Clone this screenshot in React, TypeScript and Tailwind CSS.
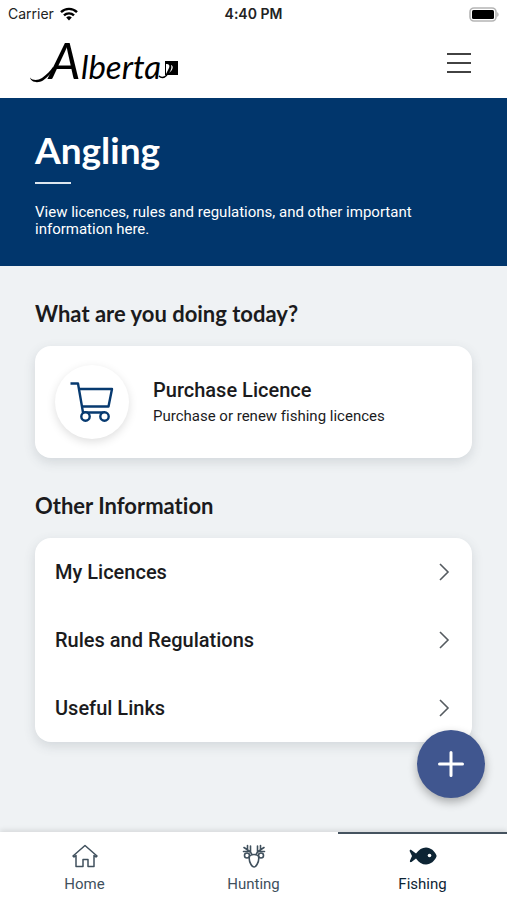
import { useState } from 'react'
import type { ReactNode } from 'react'

type TabId = 'home' | 'hunting' | 'fishing'

const LINKS = ['My Licences', 'Rules and Regulations', 'Useful Links']

function StatusBar() {
  return (
    <div className="grid h-7 grid-cols-3 items-center px-2 font-['Inter',sans-serif] text-sm text-[#222222]">
      <div className="flex items-center gap-1.5">
        <span>Carrier</span>
        <svg width="18" height="14" viewBox="0 0 18 14" fill="none" stroke="#000" strokeWidth="2.4" aria-hidden="true">
          <path d="M1 5.2a11.4 11.4 0 0 1 16 0" />
          <path d="M4 8.4a7.2 7.2 0 0 1 10 0" />
          <path d="M9 13.4 6.2 10.6a4 4 0 0 1 5.6 0z" fill="#000" stroke="none" />
        </svg>
      </div>
      <span className="text-center font-semibold whitespace-nowrap">4:40 PM</span>
      <svg className="justify-self-end" width="30" height="15" viewBox="0 0 30 15" aria-hidden="true">
        <rect x="1" y="1" width="26" height="13" rx="4" fill="#fff" stroke="#b5b5b5" strokeWidth="1.6" />
        <rect x="3" y="3" width="22" height="9" rx="1.5" fill="#000" />
        <path d="M28.3 5.2c1.6.6 1.6 4 0 4.6z" fill="#a5a5a5" />
      </svg>
    </div>
  )
}

function Logo() {
  return (
    <svg className="overflow-visible" width="150" height="46" viewBox="0 0 150 46" role="img" aria-label="Alberta">
      {/* Swash running into the wordmark */}
      <path d="M0 37.500c3 3.500 8 3 12 .5 5-3.500 8-7 11-11l1 1.500C21 33 18 37 13 40.500 8 43.500 1 42.500 0 37.500z" />
      <text x="19" y="39" fontFamily="Lato, sans-serif" fontStyle="italic" fontSize="50">A</text>
      <text x="51" y="39" fontFamily="Lato, sans-serif" fontStyle="italic" fontSize="33">lberta</text>
      <path d="M129 36c2 2 5 2 8-1" fill="none" stroke="#000" strokeWidth="1.5" />
      {/* Square mark */}
      <rect x="135" y="21" width="13" height="14" />
      <path d="M136 24c3 0 4 1 3 4l-3 6zM141 25c3 1 2 5-2 8 2-3 3-5 2-8z" fill="#fff" />
    </svg>
  )
}

function CartIcon() {
  return (
    <svg width="44" height="40" viewBox="0 0 44 40" fill="none" stroke="#073a70" strokeWidth="2.4" strokeLinejoin="round" aria-hidden="true">
      <path d="M.5 1.500H8L13 30.500h22" />
      <path d="M9 7h33l-3.500 17.500H12" />
      <circle cx="15.500" cy="34.500" r="4.200" fill="#fff" />
      <circle cx="34.500" cy="34.500" r="4.200" fill="#fff" />
    </svg>
  )
}

function HomeIcon() {
  return (
    <svg width="26" height="24" viewBox="0 0 26 24" fill="none" stroke="currentColor" strokeWidth="1.5" strokeLinejoin="round" aria-hidden="true">
      <path d="M1 12 13 1.5 25 12l-1 1-2-1.5V22.5h-6v-7h-5v7H4V11.5L2 13z" />
    </svg>
  )
}

function DeerIcon() {
  return (
    <svg width="24" height="24" viewBox="0 0 24 24" fill="none" stroke="currentColor" strokeWidth="1.6" strokeLinecap="round" strokeLinejoin="round" aria-hidden="true">
      <path d="M10 10.500C9 8 6 6 2 3.500M14 10.500c1-2.500 4-4.500 8-7M5.500 5.500V1.500M18.500 5.500V1.500M8.500 8V2M15.500 8V2M6 7.500H1.500M18 7.500h4.500" />
      <circle cx="5" cy="11.500" r="2.500" />
      <circle cx="19" cy="11.500" r="2.500" />
      <path d="M7.500 12c2.500-2 6.500-2 9 0 .8 3.500 0 6-1.500 8.500-.8 1.500-1.600 2.500-3 2.500s-2.200-1-3-2.500C7.500 18 6.700 15.500 7.500 12z" />
    </svg>
  )
}

function FishIcon() {
  return (
    <svg width="28" height="24" viewBox="0 0 28 24" fill="currentColor" aria-hidden="true">
      <path d="M7 9.500C10 5.500 13 3.500 17 3.500c5 0 8.500 3.800 10.300 7.500.4.700.4 1.300 0 2-1.800 3.700-5.300 7.500-10.300 7.500-4 0-7-2-10-6l-4.500 3.500c-1.300.5-1.900-.3-1.500-1.500L3 12 .8 7.500c-.4-1.200.2-2 1.500-1.500z" />
      <circle cx="20.500" cy="11.500" r="1.800" fill="#fff" />
    </svg>
  )
}

const TABS: { id: TabId; label: string; icon: ReactNode }[] = [
  { id: 'home', label: 'Home', icon: <HomeIcon /> },
  { id: 'hunting', label: 'Hunting', icon: <DeerIcon /> },
  { id: 'fishing', label: 'Fishing', icon: <FishIcon /> },
]

export default function App() {
  const [tab, setTab] = useState<TabId>('fishing')

  return (
    <div className="flex min-h-screen flex-col bg-[#eff2f4] font-['Roboto',sans-serif] text-[#1b1b1d] [font-variant-ligatures:none]">
      {/* Header */}
      <header className="bg-white">
        <StatusBar />
        <div className="flex h-[70px] items-center justify-between pr-9 pl-[30px]">
          <Logo />
          <button type="button" aria-label="Menu">
            <svg width="24" height="20" viewBox="0 0 24 20" stroke="#424242" strokeWidth="2" aria-hidden="true">
              <path d="M0 1h24M0 10h24M0 19h24" />
            </svg>
          </button>
        </div>
      </header>

      {/* Hero */}
      <section className="bg-[#01366c] px-[35px] py-7 text-white">
        <h1 className="font-['Lato',sans-serif] text-[37px] leading-[48px] font-bold">Angling</h1>
        <div className="mt-2 mb-5 h-0.5 w-9 bg-[#dce6ef]" />
        <p className="pr-12 text-[15px] leading-[17px]">
          View licences, rules and regulations, and other important information here.
        </p>
      </section>

      <main className="relative flex-1 px-[35px] pt-8 pb-[90px]">
        <h2 className="font-['Lato',sans-serif] text-[22px] leading-8 font-bold">What are you doing today?</h2>
        <button
          type="button"
          className="mt-4 flex h-28 w-full items-center gap-6 rounded-2xl bg-white px-5 text-left shadow-[0_4px_12px_rgba(60,75,85,0.16)]"
        >
          <span className="flex size-[74px] shrink-0 items-center justify-center rounded-full bg-white shadow-[0_3px_10px_rgba(0,0,0,0.13)]">
            <CartIcon />
          </span>
          <span>
            <span className="block text-[20px] leading-7 font-medium">Purchase Licence</span>
            <span className="block text-[15px] leading-6">Purchase or renew fishing licences</span>
          </span>
        </button>

        <h2 className="mt-8 font-['Lato',sans-serif] text-[22px] leading-8 font-bold">Other Information</h2>
        <ul className="mt-4 rounded-2xl bg-white shadow-[0_4px_12px_rgba(60,75,85,0.16)]">
          {LINKS.map((label) => (
            <li key={label}>
              <a href="#" className="flex h-[68px] items-center justify-between px-5 text-[20px] font-medium">
                {label}
                <svg className="mr-0.5" width="12" height="18" viewBox="0 0 12 18" fill="none" stroke="#555b60" strokeWidth="1.6" aria-hidden="true">
                  <path d="m2 1 8 8-8 8" />
                </svg>
              </a>
            </li>
          ))}
        </ul>

        <button
          type="button"
          aria-label="Add"
          className="absolute right-[22px] bottom-[34px] flex size-[68px] items-center justify-center rounded-full bg-[#40568f] shadow-[0_4px_10px_rgba(0,0,0,0.3)]"
        >
          <svg width="26" height="26" viewBox="0 0 26 26" stroke="#fff" strokeWidth="3" strokeLinecap="round" aria-hidden="true">
            <path d="M13 1.500v23M1.500 13h23" />
          </svg>
        </button>
      </main>

      {/* Bottom tabs */}
      <nav className="grid grid-cols-3 bg-white shadow-[0_-2px_5px_rgba(0,0,0,0.1)]">
        {TABS.map((t) => (
          <button
            key={t.id}
            type="button"
            onClick={() => setTab(t.id)}
            className={`flex h-[68px] flex-col items-center gap-1 border-t-2 pt-2.5 text-[15px] leading-6 ${
              tab === t.id ? 'border-[#45535f] text-[#0d2434]' : 'border-transparent text-[#40505d]'
            }`}
          >
            {t.icon}
            {t.label}
          </button>
        ))}
      </nav>
    </div>
  )
}
